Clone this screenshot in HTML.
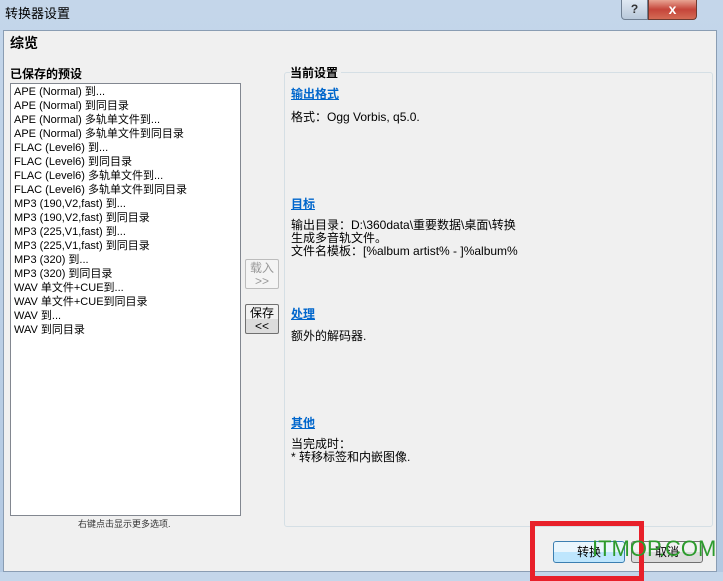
<!DOCTYPE html>
<html><head><meta charset="utf-8"><style>
*{margin:0;padding:0;box-sizing:border-box}
body{width:723px;height:572px;overflow:hidden;background:linear-gradient(#c4d6ea,#b3c9e2);font-family:"Liberation Sans","Noto Sans CJK SC",sans-serif;font-size:11px;color:#000;position:relative}
.a{position:absolute}
.t{line-height:14px;white-space:nowrap}
.r{font-size:12px}
</style></head><body>
<div class="a t" style="left:5px;top:7px;font-size:13px">转换器设置</div>
<div class="a" style="left:621px;top:0;width:27px;height:20px;border:1px solid #6f7f92;border-top:none;border-radius:0 0 0 4px;background:linear-gradient(#dfe8f2,#b8c8da);text-align:center;font-weight:bold;line-height:18px;color:#333;font-size:12px">?</div>
<div class="a" style="left:648px;top:0;width:49px;height:20px;border:1px solid #6f3a30;border-top:none;border-radius:0 0 4px 0;background:linear-gradient(#e8a493,#c5453a 50%,#d46b55);text-align:center;font-weight:bold;line-height:18px;color:#fff;font-size:14px">x</div>
<div class="a" style="left:3px;top:30px;width:714px;height:542px;background:#f0f0f0;border:1px solid #8a9db3"></div>
<div class="a t" style="left:10px;top:36px;font-size:14px;font-weight:bold">综览</div>
<div class="a t" style="left:10px;top:67px;font-weight:bold;font-size:12px">已保存的预设</div>
<div class="a" style="left:10px;top:83px;width:231px;height:433px;background:#fff;border:1px solid #828790;padding:1px 3px">
<div class="t">APE (Normal) 到...<br>APE (Normal) 到同目录<br>APE (Normal) 多轨单文件到...<br>APE (Normal) 多轨单文件到同目录<br>FLAC (Level6) 到...<br>FLAC (Level6) 到同目录<br>FLAC (Level6) 多轨单文件到...<br>FLAC (Level6) 多轨单文件到同目录<br>MP3 (190,V2,fast) 到...<br>MP3 (190,V2,fast) 到同目录<br>MP3 (225,V1,fast) 到...<br>MP3 (225,V1,fast) 到同目录<br>MP3 (320) 到...<br>MP3 (320) 到同目录<br>WAV 单文件+CUE到...<br>WAV 单文件+CUE到同目录<br>WAV 到...<br>WAV 到同目录</div></div>
<div class="a t" style="left:78px;top:517px;font-size:9px;color:#333">右键点击显示更多选项.</div>
<div class="a" style="left:245px;top:259px;width:34px;height:30px;border:1px solid #bcbcbc;border-radius:2px;background:#f4f4f4;color:#999;text-align:center;line-height:13px;padding-top:2px;font-size:12px">载入<br>&gt;&gt;</div>
<div class="a" style="left:245px;top:304px;width:34px;height:30px;border:1px solid #707070;border-radius:2px;background:linear-gradient(#f2f2f2 50%,#dcdcdc 50%);text-align:center;line-height:13px;padding-top:2px;font-size:12px">保存<br>&lt;&lt;</div>
<div class="a" style="left:284px;top:72px;width:429px;height:455px;border:1px solid #d5dfe5;border-radius:3px"></div>
<div class="a t" style="left:290px;top:66px;background:#f0f0f0;padding-right:3px;font-weight:bold;font-size:12px">当前设置</div>
<div class="a t r" style="left:291px;top:87px;font-weight:bold;color:#0066cc;text-decoration:underline">输出格式</div>
<div class="a t r" style="left:291px;top:110px">格式：Ogg Vorbis, q5.0.</div>
<div class="a t r" style="left:291px;top:197px;font-weight:bold;color:#0066cc;text-decoration:underline">目标</div>
<div class="a t r" style="left:291px;top:219px;line-height:13px">输出目录：D:\360data\重要数据\桌面\转换<br>生成多音轨文件。<br>文件名模板：[%album artist% - ]%album%</div>
<div class="a t r" style="left:291px;top:307px;font-weight:bold;color:#0066cc;text-decoration:underline">处理</div>
<div class="a t r" style="left:291px;top:329px">额外的解码器.</div>
<div class="a t r" style="left:291px;top:416px;font-weight:bold;color:#0066cc;text-decoration:underline">其他</div>
<div class="a t r" style="left:291px;top:438px;line-height:13px">当完成时：<br>* 转移标签和内嵌图像.</div>
<div class="a" style="left:553px;top:541px;width:72px;height:22px;border:1px solid #3c7fb1;border-radius:3px;background:linear-gradient(#eaf6fd 50%,#bee6fd 50%);text-align:center;line-height:20px;font-size:12px">转换</div>
<div class="a" style="left:631px;top:541px;width:72px;height:22px;border:1px solid #707070;border-radius:3px;background:linear-gradient(#f2f2f2 50%,#dcdcdc 50%);text-align:center;line-height:20px;font-size:12px">取消</div>
<div class="a" style="left:530px;top:521px;width:114px;height:60px;border:5px solid #e8202a"></div>
<div class="a t" style="left:592px;top:537px;font-size:22px;color:#2d9b2d;line-height:24px">ITMOP.COM</div>
</body></html>
